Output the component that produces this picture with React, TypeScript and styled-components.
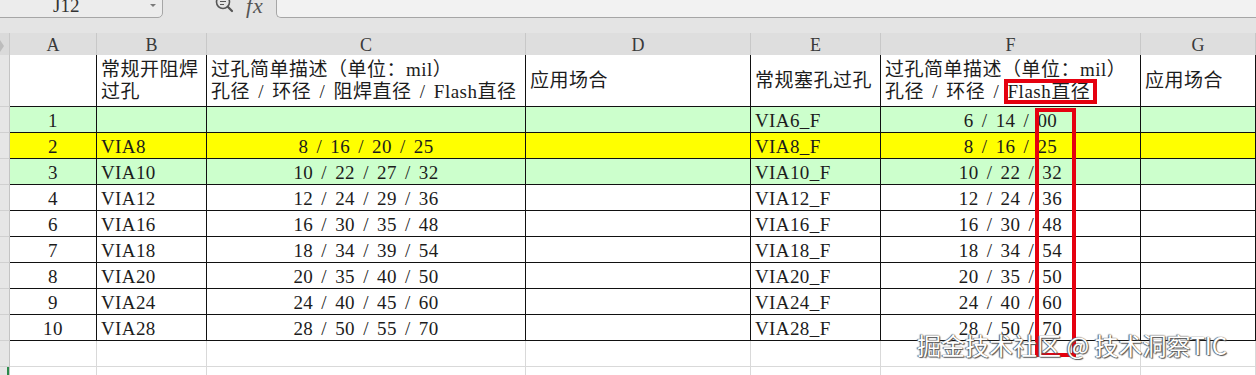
import React from "react";
import styled, { createGlobalStyle } from "styled-components";

const COLS = "10px 87px 110px 319px 225px 130px 260px 115px";
const CELL_FONT = `"Liberation Serif", "Noto Sans CJK SC", serif`;

const GlobalStyle = createGlobalStyle`
  html, body {
    margin: 0;
    padding: 0;
    background: #ffffff;
    overflow: hidden;
  }
  * {
    box-sizing: border-box;
  }
`;

const Page = styled.div`
  position: relative;
  width: 1256px;
  height: 375px;
  overflow: hidden;
  background: #ffffff;
  font-family: ${CELL_FONT};
  color: #1c1c1c;
`;

/* ---------- top bar (name box + formula bar, cropped) ---------- */

const Toolbar = styled.div`
  display: flex;
  align-items: flex-end;
  height: 18px;
  overflow: hidden;
  background: #e4e4e4;
`;

const NameBox = styled.div`
  position: relative;
  display: flex;
  align-items: flex-end;
  width: 165px;
  height: 24px;
  margin-left: -2px;
  padding: 0 0 2px 54px;
  background: #ececec;
  border: 1px solid #a6a6a6;
  border-radius: 0 0 5px 0;
  font-size: 19px;
  line-height: 18px;
  color: #333;
`;

const DropArrow = styled.span`
  position: absolute;
  right: 6px;
  top: 9px;
  width: 0;
  height: 0;
  border-left: 3px solid transparent;
  border-right: 3px solid transparent;
  border-top: 3px solid #7a7a7a;
`;

const FxGroup = styled.div`
  display: flex;
  align-items: flex-end;
  gap: 9px;
  width: 113px;
  height: 18px;
  padding: 0 0 3px 52px;
  color: #555;
`;

const FxLabel = styled.span`
  font-family: "Liberation Serif", serif;
  font-style: italic;
  font-size: 22px;
  line-height: 18px;
  letter-spacing: 1px;
  color: #555;
`;

const FormulaBox = styled.div`
  flex: 1;
  height: 22px;
  background: #f2f2f2;
  border-left: 1px solid #a6a6a6;
  border-bottom: 1px solid #a6a6a6;
  border-radius: 0 0 0 5px;
`;

const Band = styled.div`
  height: 15px;
  background: #e4e4e4;
`;

/* ---------- sheet grid ---------- */

const GridRow = styled.div<{ $h: number }>`
  display: grid;
  grid-template-columns: ${COLS};
  height: ${(p) => p.$h}px;
`;

const ColHead = styled.div`
  display: flex;
  align-items: center;
  justify-content: center;
  background: #dedede;
  border-right: 1px solid #c8c8c8;
  border-bottom: 1px solid #b9b9b9;
  font-size: 18px;
  color: #3a3a3a;
  padding-top: 2px;
`;

const Corner = styled(ColHead)`
  justify-content: flex-start;
  background: #dadada;
  &::before {
    content: "";
    width: 0;
    height: 0;
    border-top: 6px solid transparent;
    border-bottom: 6px solid transparent;
    border-left: 4px solid #bcbcbc;
  }
`;

const RowHead = styled.div<{ $selected?: boolean }>`
  background: #e6e6e6;
  border-right: 1px solid #c4c4c4;
  border-bottom: 1px solid #d0d0d0;
  box-shadow: ${(p) => (p.$selected ? "inset -2px 0 0 #2a8a4a" : "none")};
`;

const Cell = styled.div<{ $align?: "left" | "center"; $bg?: string; $ruled?: boolean }>`
  display: flex;
  align-items: center;
  justify-content: ${(p) => (p.$align === "center" ? "center" : "flex-start")};
  padding: 2px 4px 0;
  background: ${(p) => p.$bg ?? "#ffffff"};
  border-right: 1px solid ${(p) => (p.$ruled ? "#111111" : "#d9d9d9")};
  border-bottom: 1px solid ${(p) => (p.$ruled ? "#111111" : "#d9d9d9")};
  font-size: 19px;
  line-height: 24px;
  letter-spacing: 0.4px;
  word-spacing: 3px;
  white-space: nowrap;
  overflow: hidden;
`;

const HeadCell = styled(Cell)`
  padding: 0 4px;
  line-height: 22px;
  letter-spacing: 0.5px;
`;

/* ---------- overlays ---------- */

const RedBox = styled.div`
  position: absolute;
  border: 4px solid #e5000f;
  pointer-events: none;
`;

const Watermark = styled.div`
  position: absolute;
  left: 917px;
  top: 333px;
  font-family: "Noto Sans CJK SC", "Noto Sans", sans-serif;
  font-size: 24px;
  line-height: 24px;
  color: #ffffff;
  white-space: nowrap;
  text-shadow: 0 0 1px #3c3c3c, 1px 1px 1px #555555, -1px 0 1px #6a6a6a;
`;

const GREEN = "#ccffcc";
const YELLOW = "#ffff00";

type DataRow = { n: string; b: string; c: string; e: string; f: string; bg?: string };

const rows: DataRow[] = [
  { n: "1", b: "", c: "", e: "VIA6_F", f: "6 / 14 / 00", bg: GREEN },
  { n: "2", b: "VIA8", c: "8 / 16 / 20 / 25", e: "VIA8_F", f: "8 / 16 / 25", bg: YELLOW },
  { n: "3", b: "VIA10", c: "10 / 22 / 27 / 32", e: "VIA10_F", f: "10 / 22 / 32", bg: GREEN },
  { n: "4", b: "VIA12", c: "12 / 24 / 29 / 36", e: "VIA12_F", f: "12 / 24 / 36" },
  { n: "6", b: "VIA16", c: "16 / 30 / 35 / 48", e: "VIA16_F", f: "16 / 30 / 48" },
  { n: "7", b: "VIA18", c: "18 / 34 / 39 / 54", e: "VIA18_F", f: "18 / 34 / 54" },
  { n: "8", b: "VIA20", c: "20 / 35 / 40 / 50", e: "VIA20_F", f: "20 / 35 / 50" },
  { n: "9", b: "VIA24", c: "24 / 40 / 45 / 60", e: "VIA24_F", f: "24 / 40 / 60" },
  { n: "10", b: "VIA28", c: "28 / 50 / 55 / 70", e: "VIA28_F", f: "28 / 50 / 70" },
];

function Magnifier() {
  return (
    <svg width="22" height="18" viewBox="0 0 22 18" fill="none" stroke="#555" strokeWidth="1.6">
      <circle cx="8" cy="5" r="6.5" />
      <path d="M5 4.5h6M5 7.5h4" strokeWidth="1.2" />
      <path d="M12.8 9.8L17 14" strokeWidth="2.2" strokeLinecap="round" />
    </svg>
  );
}

export default function App() {
  return (
    <Page>
      <GlobalStyle />
      <Toolbar>
        <NameBox>
          J12
          <DropArrow />
        </NameBox>
        <FxGroup>
          <Magnifier />
          <FxLabel>fx</FxLabel>
        </FxGroup>
        <FormulaBox />
      </Toolbar>
      <Band />

      <GridRow $h={22}>
        <Corner />
        {["A", "B", "C", "D", "E", "F", "G"].map((l) => (
          <ColHead key={l}>{l}</ColHead>
        ))}
      </GridRow>

      <GridRow $h={52}>
        <RowHead />
        <HeadCell $ruled />
        <HeadCell $ruled>
          常规开阻焊
          <br />
          过孔
        </HeadCell>
        <HeadCell $ruled>
          过孔简单描述（单位：mil）
          <br />
          孔径 / 环径 / 阻焊直径 / Flash直径
        </HeadCell>
        <HeadCell $ruled>应用场合</HeadCell>
        <HeadCell $ruled>常规塞孔过孔</HeadCell>
        <HeadCell $ruled>
          过孔简单描述（单位：mil）
          <br />
          孔径 / 环径 / Flash直径
        </HeadCell>
        <HeadCell $ruled>应用场合</HeadCell>
      </GridRow>

      {rows.map((r) => (
        <GridRow $h={26} key={r.n}>
          <RowHead />
          <Cell $ruled $bg={r.bg} $align="center">{r.n}</Cell>
          <Cell $ruled $bg={r.bg}>{r.b}</Cell>
          <Cell $ruled $bg={r.bg} $align="center">{r.c}</Cell>
          <Cell $ruled $bg={r.bg} />
          <Cell $ruled $bg={r.bg}>{r.e}</Cell>
          <Cell $ruled $bg={r.bg} $align="center">{r.f}</Cell>
          <Cell $ruled $bg={r.bg} />
        </GridRow>
      ))}

      {[false, true].map((sel, i) => (
        <GridRow $h={26} key={`empty-${i}`}>
          <RowHead $selected={sel} />
          {Array.from({ length: 7 }).map((_, j) => (
            <Cell key={j} />
          ))}
        </GridRow>
      ))}

      <RedBox style={{ left: 1004, top: 79, width: 93, height: 25 }} />
      <RedBox style={{ left: 1035, top: 108, width: 41, height: 249 }} />
      <Watermark>掘金技术社区 @ 技术洞察TIC</Watermark>
    </Page>
  );
}
